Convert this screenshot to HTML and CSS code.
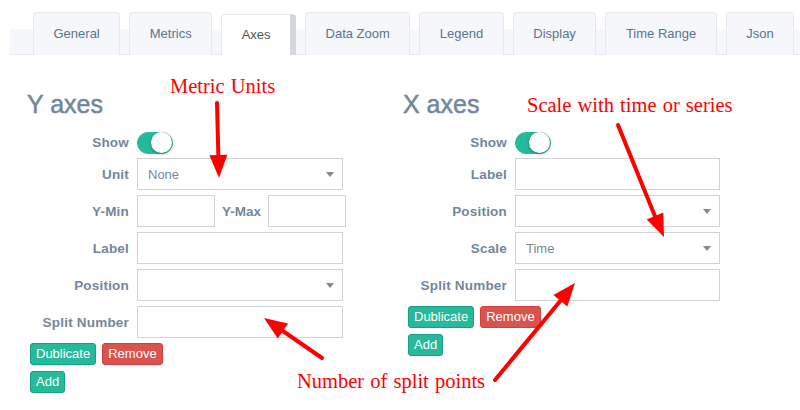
FILE: index.html
```html
<!DOCTYPE html>
<html>
<head>
<meta charset="utf-8">
<link rel="stylesheet" href="styles.css">
</head>
<body>
<div class="page">
  <div class="tabbar">
    <div class="tab">General</div>
    <div class="tab">Metrics</div>
    <div class="tab active">Axes</div>
    <div class="tab">Data Zoom</div>
    <div class="tab">Legend</div>
    <div class="tab">Display</div>
    <div class="tab">Time Range</div>
    <div class="tab">Json</div>
  </div>

  <div class="panels">
    <section class="panel panel-y">
      <h2 class="heading">Y axes</h2>
      <div class="row row-show">
        <label class="lbl">Show</label>
        <span class="switch"><span class="knob"></span></span>
      </div>
      <div class="row">
        <label class="lbl">Unit</label>
        <div class="select">None<span class="caret"></span></div>
      </div>
      <div class="row">
        <label class="lbl">Y-Min</label>
        <div class="input input-sm"></div>
        <label class="lbl-inline">Y-Max</label>
        <div class="input input-sm"></div>
      </div>
      <div class="row">
        <label class="lbl">Label</label>
        <div class="input"></div>
      </div>
      <div class="row">
        <label class="lbl">Position</label>
        <div class="select"><span class="caret"></span></div>
      </div>
      <div class="row">
        <label class="lbl">Split Number</label>
        <div class="input"></div>
      </div>
      <div class="actions">
        <div class="btn-line">
          <span class="btn btn-green">Dublicate</span>
          <span class="btn btn-red">Remove</span>
        </div>
        <div class="btn-line">
          <span class="btn btn-green">Add</span>
        </div>
      </div>
    </section>

    <section class="panel panel-x">
      <h2 class="heading">X axes</h2>
      <div class="row row-show">
        <label class="lbl">Show</label>
        <span class="switch"><span class="knob"></span></span>
      </div>
      <div class="row">
        <label class="lbl">Label</label>
        <div class="input"></div>
      </div>
      <div class="row">
        <label class="lbl">Position</label>
        <div class="select"><span class="caret"></span></div>
      </div>
      <div class="row">
        <label class="lbl">Scale</label>
        <div class="select">Time<span class="caret"></span></div>
      </div>
      <div class="row">
        <label class="lbl">Split Number</label>
        <div class="input"></div>
      </div>
      <div class="actions">
        <div class="btn-line">
          <span class="btn btn-green">Dublicate</span>
          <span class="btn btn-red">Remove</span>
        </div>
        <div class="btn-line">
          <span class="btn btn-green">Add</span>
        </div>
      </div>
    </section>
  </div>

  <div class="note note-units">Metric Units</div>
  <div class="note note-scale">Scale with time or series</div>
  <div class="note note-split">Number of split points</div>

  <svg class="arrows" width="800" height="410" viewBox="0 0 800 410">
    <g stroke="#ff0000" stroke-width="4" stroke-linecap="round" fill="none">
      <line x1="217" y1="103" x2="218.4" y2="157"/>
      <line x1="618" y1="125" x2="655.3" y2="217"/>
      <line x1="495" y1="380" x2="560.4" y2="300.8"/>
      <line x1="322" y1="358" x2="282.9" y2="331"/>
    </g>
    <g fill="#ff0000">
      <polygon points="209.4,155.2 227.4,154.8 219,178"/>
      <polygon points="646.7,219.4 663.3,212.6 664,237"/>
      <polygon points="553.4,295.1 567.3,306.5 575,283"/>
      <polygon points="277.8,338.4 288,323.6 264,318"/>
    </g>
  </svg>
</div>
</body>
</html>
```

FILE: styles.css
```css
* { box-sizing: border-box; }

html, body {
  margin: 0;
  padding: 0;
  background: #ffffff;
}

body {
  font-family: "Liberation Sans", Arial, sans-serif;
  color: #73879c;
}

.page {
  position: relative;
  width: 800px;
  height: 410px;
  overflow: hidden;
}

/* ---------- tabs ---------- */
.tabbar {
  margin: 29px 0 0 10px;
  height: 26px;
  background: #f5f7fa;
  border-bottom: 1px solid #e6e9ed;
  display: flex;
  align-items: flex-end;
  gap: 9px;
  padding-left: 23px;
}

.tab {
  flex: none;
  height: 43px;
  margin-bottom: -1px;
  padding: 13px 19.5px 0;
  line-height: 16px;
  font-size: 13px;
  color: #5a738e;
  background: #f5f7fa;
  border: 1px solid #e6e9ed;
  border-bottom: none;
  border-radius: 4px 4px 0 0;
  white-space: nowrap;
}

.tab.active {
  height: 41px;
  padding-top: 12px;
  background: #ffffff;
  color: #555555;
  border-right: 6px solid #d3d6da;
}

/* ---------- panels ---------- */
.panels {
  display: grid;
  grid-template-columns: 376px 1fr;
  padding-left: 27px;
  margin-top: 37px;
}

.heading {
  margin: 0 0 14px;
  font-size: 25px;
  line-height: 25px;
  font-weight: 400;
  color: #73879c;
  -webkit-text-stroke: 0.5px #73879c;
}

.row {
  display: flex;
  align-items: center;
  gap: 8px;
  height: 32px;
  margin-bottom: 5px;
}

.row-show {
  height: 23px;
  margin-bottom: 4px;
}

.lbl {
  flex: none;
  width: 102px;
  text-align: right;
  font-size: 13.5px;
  font-weight: 700;
  letter-spacing: 0.2px;
  color: #73879c;
  white-space: nowrap;
}

.panel-x .lbl { width: 104px; }

.lbl-inline {
  flex: none;
  font-size: 13.5px;
  font-weight: 700;
  color: #73879c;
  margin: 0 -1px;
}

.switch {
  display: flex;
  justify-content: flex-end;
  width: 36px;
  height: 22px;
  border-radius: 11px;
  background: #26b99a;
  border: 1px solid #26b99a;
}

.knob {
  width: 21px;
  height: 21px;
  margin-top: -0.5px;
  border-radius: 50%;
  background: #ffffff;
  box-shadow: 0 1px 3px rgba(0, 0, 0, 0.35);
}

.input,
.select {
  width: 206px;
  height: 32px;
  border: 1px solid #d2d2d2;
  background: #ffffff;
}

.panel-x .input,
.panel-x .select { width: 205px; }

.input-sm { width: 78px; }

.select {
  display: flex;
  align-items: center;
  justify-content: space-between;
  padding: 1px 8px 0 10px;
  font-size: 13px;
  color: #7a8896;
}

.caret {
  margin-left: auto;
  width: 0;
  height: 0;
  border-left: 4.5px solid transparent;
  border-right: 4.5px solid transparent;
  border-top: 5px solid #888888;
}

/* ---------- buttons ---------- */
.actions {
  display: flex;
  flex-direction: column;
  gap: 6px;
  margin-left: 3px;
}

.panel-x .actions { margin-left: 5px; }

.btn-line {
  display: flex;
  gap: 6px;
}

.btn {
  height: 22px;
  padding: 0 5px;
  font-size: 13px;
  line-height: 20px;
  color: #ffffff;
  border-radius: 3px;
  border: 1px solid transparent;
}

.btn-green {
  background: #26b99a;
  border-color: #169f85;
}

.btn-red {
  background: #d9534f;
  border-color: #d43f3a;
}

/* ---------- annotations ---------- */
.note {
  position: absolute;
  font-family: "Liberation Serif", "Times New Roman", serif;
  font-size: 20.5px;
  line-height: 20px;
  word-spacing: 1px;
  color: #ff0000;
  white-space: nowrap;
}

.note-units { left: 170px; top: 76px; }
.note-scale { left: 527px; top: 95px; }
.note-split { left: 297px; top: 371px; }

.arrows {
  position: absolute;
  left: 0;
  top: 0;
  pointer-events: none;
}
```
